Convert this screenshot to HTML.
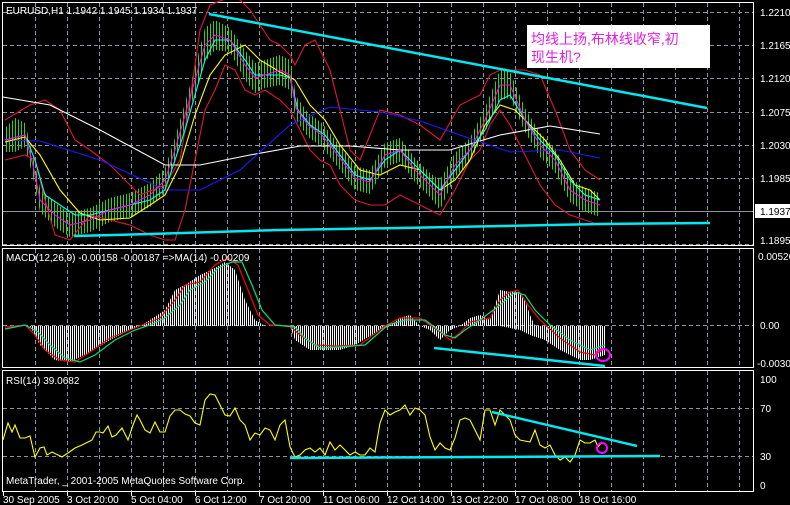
<!DOCTYPE html>
<html><head><meta charset="utf-8"><style>
body{margin:0;background:#000;width:790px;height:505px;overflow:hidden}
svg{display:block}
text{font-family:"Liberation Sans","Noto Sans CJK SC",sans-serif;fill:#fff;font-size:10px}
</style></head><body>
<svg width="790" height="505" viewBox="0 0 790 505">
<defs>
<pattern id="gb" width="3" height="10" patternUnits="userSpaceOnUse"><rect width="1" height="10" fill="#39d400"/></pattern>
<pattern id="wb" width="2" height="10" patternUnits="userSpaceOnUse"><rect width="1" height="10" fill="#fff"/></pattern>
</defs>
<rect width="790" height="505" fill="#000"/>
<g fill="none" stroke="#fff" stroke-width="1">
<rect x="2.5" y="2.5" width="751" height="243"/>
<rect x="2.5" y="248.5" width="751" height="119"/>
<rect x="2.5" y="370.5" width="751" height="121"/>
</g>
<g stroke="#8a96a4" stroke-width="1" stroke-dasharray="4,3">
<path d="M35.5 3V245M67.5 3V245M99.5 3V245M131.5 3V245M163.5 3V245M195.5 3V245M227.5 3V245M259.5 3V245M291.5 3V245M323.5 3V245M355.5 3V245M387.5 3V245M419.5 3V245M451.5 3V245M483.5 3V245M515.5 3V245M547.5 3V245M579.5 3V245M611.5 3V245M643.5 3V245M675.5 3V245M707.5 3V245M739.5 3V245"/>
<path d="M35.5 249V367M67.5 249V367M99.5 249V367M131.5 249V367M163.5 249V367M195.5 249V367M227.5 249V367M259.5 249V367M291.5 249V367M323.5 249V367M355.5 249V367M387.5 249V367M419.5 249V367M451.5 249V367M483.5 249V367M515.5 249V367M547.5 249V367M579.5 249V367M611.5 249V367M643.5 249V367M675.5 249V367M707.5 249V367M739.5 249V367"/>
<path d="M35.5 371V491M67.5 371V491M99.5 371V491M131.5 371V491M163.5 371V491M195.5 371V491M227.5 371V491M259.5 371V491M291.5 371V491M323.5 371V491M355.5 371V491M387.5 371V491M419.5 371V491M451.5 371V491M483.5 371V491M515.5 371V491M547.5 371V491M579.5 371V491M611.5 371V491M643.5 371V491M675.5 371V491M707.5 371V491M739.5 371V491"/>
<path d="M3 12.5H753M3 45.5H753M3 78.5H753M3 112.5H753M3 145.5H753M3 178.5H753M3 244.5H753M3 325.5H753M3 408.5H753M3 456.5H753"/>
</g>
<path d="M3 211.5H753" stroke="#8a96a4"/>
<polygon fill="url(#gb)" points="5,128 15,118 25,123 33,155 40,188 55,203 70,213 90,208 110,198 130,193 150,183 165,168 175,138 185,103 195,68 205,28 215,20 230,28 245,50 255,63 265,60 280,55 290,60 296,96 308,113 322,123 340,146 355,166 370,170 385,143 400,138 415,158 430,173 440,180 455,153 470,138 485,108 500,70 510,72 525,108 540,133 555,148 570,178 585,188 600,193 600,217 585,212 570,202 555,172 540,157 525,132 510,98 500,100 485,132 470,162 455,177 440,210 430,197 415,182 400,162 385,167 370,194 355,190 340,170 322,147 308,137 296,120 290,90 280,85 265,88 255,93 245,80 230,52 215,50 205,62 195,92 185,127 175,162 165,192 150,207 130,217 110,222 90,232 70,237 55,227 40,212 33,177 25,147 15,152 5,152"/>
<g fill="none" stroke-width="1.1">
<polyline stroke="#e0163a" points="5,120 30,105 45,100 60,110 75,140 90,150 110,165 140,195 165,185 180,160 190,100 200,30 210,5 235,-5 250,10 260,25 270,40 280,45 290,55 295,65 305,45 315,40 330,70 340,110 350,150 360,160 380,110 400,115 420,125 440,140 460,105 480,95 490,75 500,70 515,70 525,70 540,75 555,110 570,150 585,170 600,180"/>
<polyline stroke="#e0163a" points="5,160 25,155 35,160 45,200 55,235 70,240 90,215 110,220 130,225 150,235 165,240 175,240 185,210 195,160 205,110 215,90 225,65 235,70 245,90 255,95 265,90 280,100 290,110 300,130 310,150 320,160 330,165 340,185 355,200 370,205 385,205 400,195 420,205 440,215 455,190 470,160 480,150 490,125 500,110 510,125 525,155 540,185 555,205 570,215 585,220 600,225"/>
<polyline stroke="#ffffff" points="3,97 50,105 100,130 165,165 200,165 250,155 300,146 350,146 400,150 450,150 500,135 550,126 600,134"/>
<polyline stroke="#1a1aff" points="3,140 40,141 100,160 165,190 200,190 240,170 290,125 330,107 380,112 420,121 460,135 510,152 560,150 600,158"/>
<polyline stroke="#ffff00" points="5,142 25,137 40,155 60,190 80,213 100,220 130,218 150,205 165,195 180,165 195,115 210,75 225,55 245,45 260,60 280,72 295,80 310,105 325,120 340,145 360,170 380,175 400,165 420,170 440,190 455,180 470,160 485,125 500,105 515,110 530,125 545,140 560,160 575,185 590,190 600,200"/>
<polyline stroke="#00ffff" points="5,140 25,135 35,160 45,195 60,205 75,215 90,215 110,210 130,205 150,200 165,190 175,160 185,130 195,95 205,60 215,40 230,40 245,60 255,75 265,75 280,75 290,78 298,110 310,125 325,135 340,155 355,175 370,180 385,160 400,150 415,165 430,180 440,190 455,170 470,150 485,130 500,100 510,95 525,120 540,140 555,155 570,180 585,195 600,200"/>
<polyline stroke="#ff00ff" points="5,140 25,135 33,165 40,200 55,215 70,225 90,220 110,210 130,205 150,195 165,180 175,150 185,115 195,80 205,45 215,35 230,40 245,65 255,78 265,75 280,70 290,75 296,108 308,125 322,135 340,158 355,178 370,182 385,155 400,150 415,170 430,185 440,195 455,165 470,150 485,120 500,85 510,85 525,120 540,145 555,160 570,190 585,200 600,205"/>
</g>
<g stroke="#00e8f0" stroke-width="2.5">
<line x1="209" y1="14" x2="707" y2="108"/>
<polyline fill="none" points="74,236 150,234 280,230 400,228 600,224 710,223"/>
</g>
<rect x="527" y="25" width="183" height="43" fill="#fff"/>
<text x="531" y="44" style="fill:#e020e0;font-size:14px">均线上扬,布林线收窄,初</text>
<text x="531" y="62" style="fill:#e020e0;font-size:14px">现生机?</text>
<text x="6" y="14">EURUSD,H1  1.1942 1.1945 1.1934 1.1937</text>
<text x="760" y="16">1.2210</text>
<text x="760" y="49">1.2165</text>
<text x="760" y="82">1.2120</text>
<text x="760" y="116">1.2075</text>
<text x="760" y="149">1.2030</text>
<text x="760" y="182">1.1985</text>
<rect x="755" y="204" width="35" height="14" fill="#fff"/>
<text x="760" y="215" style="fill:#000">1.1937</text>
<text x="760" y="244">1.1895</text>
<text x="758" y="260">0.00526</text>
<text x="760" y="329">0.00</text>
<text x="757" y="367">-0.00300</text>
<text x="760" y="383">100</text>
<text x="760" y="412">70</text>
<text x="760" y="460">30</text>
<text x="760" y="489">0</text>
<polygon fill="url(#wb)" points="30,326 40,345 55,360 70,362 90,352 110,340 130,330 140,326 150,320 165,310 175,290 185,285 200,275 215,268 225,262 235,270 245,300 255,320 265,326 290,326 295,340 310,350 340,350 355,345 380,330 390,326 400,318 410,315 420,326 430,330 440,340 450,330 460,326 470,318 480,315 490,320 500,290 510,292 520,292 525,300 530,315 535,326 600,326 605,326 605,355 590,360 580,360 560,350 545,340 530,335 520,330 500,326"/>
<g fill="none" stroke-width="1.2">
<polyline stroke="#ff0000" points="5,327 25,325 35,335 45,350 60,360 75,362 90,352 110,338 130,330 145,324 160,318 175,300 185,285 200,282 215,265 228,258 238,265 248,290 258,315 270,325 290,326 300,335 315,345 335,346 360,345 385,326 400,318 420,318 440,332 450,340 460,333 470,322 490,318 500,300 510,292 518,290 528,305 540,320 560,338 580,352 595,355 605,348"/>
<polyline stroke="#00e080" points="5,329 25,325 38,332 50,345 65,358 80,362 95,355 115,340 135,330 150,325 165,318 180,305 190,290 205,282 218,268 232,262 242,262 252,285 262,310 275,325 295,327 305,338 320,348 340,347 365,345 388,325 405,320 425,320 445,335 455,338 465,330 480,320 500,305 515,292 525,295 535,310 550,325 570,340 590,350 605,345"/>
</g>
<line x1="434" y1="348" x2="605" y2="366" stroke="#00e8f0" stroke-width="2.5"/>
<ellipse cx="603" cy="355" rx="7" ry="6" fill="none" stroke="#ff00ff" stroke-width="2"/>
<text x="6" y="261">MACD(12,26,9) -0.00158 -0.00187  =&gt;MA(14) -0.00209</text>
<polyline fill="none" stroke="#ffff00" stroke-width="1.1" points="3,440 8,423 12,432 15,425 20,438 25,438 30,436 35,457 40,448 44,447 47,455 52,452 58,455 62,457 68,453 75,448 82,445 88,442 92,440 96,432 100,432 103,433 108,426 112,437 116,435 122,428 128,440 133,425 137,415 140,420 145,430 150,433 155,422 160,432 165,432 170,416 175,410 180,410 185,414 190,416 195,423 200,425 205,400 210,394 215,395 220,405 225,415 230,416 235,408 240,420 245,425 250,440 255,433 260,435 265,428 270,430 275,440 280,425 285,420 290,447 295,457 300,455 305,450 310,448 315,452 320,448 325,455 330,442 335,450 340,445 345,450 350,455 355,452 360,455 365,455 370,448 375,452 380,423 385,410 390,415 395,412 400,410 405,405 410,415 415,408 420,410 425,415 430,437 435,450 440,443 445,448 450,450 455,438 460,420 465,418 470,420 475,430 480,440 485,410 490,410 495,425 500,410 505,415 510,420 515,435 520,440 530,442 535,430 540,445 545,448 550,445 555,455 560,460 565,457 570,462 575,455 580,440 585,443 590,443 595,440 598,447 602,442"/>
<g stroke="#00e8f0" stroke-width="2.5">
<line x1="290" y1="458" x2="660" y2="456"/>
<line x1="492" y1="412" x2="637" y2="446"/>
</g>
<circle cx="602" cy="448" r="5" fill="none" stroke="#ff00ff" stroke-width="2"/>
<text x="6" y="384">RSI(14) 39.0682</text>
<text x="6" y="484">MetaTrader, _ 2001-2005 MetaQuotes Software Corp.</text>
<g stroke="#fff"><path d="M3.5 492v4M67.5 492v4M131.5 492v4M195.5 492v4M259.5 492v4M323.5 492v4M387.5 492v4M451.5 492v4M515.5 492v4M579.5 492v4"/></g>
<text x="3" y="503">30 Sep 2005</text>
<text x="67" y="503">3 Oct 20:00</text>
<text x="131" y="503">5 Oct 04:00</text>
<text x="195" y="503">6 Oct 12:00</text>
<text x="259" y="503">7 Oct 20:00</text>
<text x="323" y="503">11 Oct 06:00</text>
<text x="387" y="503">12 Oct 14:00</text>
<text x="451" y="503">13 Oct 22:00</text>
<text x="515" y="503">17 Oct 08:00</text>
<text x="579" y="503">18 Oct 16:00</text>
</svg>
</body></html>
